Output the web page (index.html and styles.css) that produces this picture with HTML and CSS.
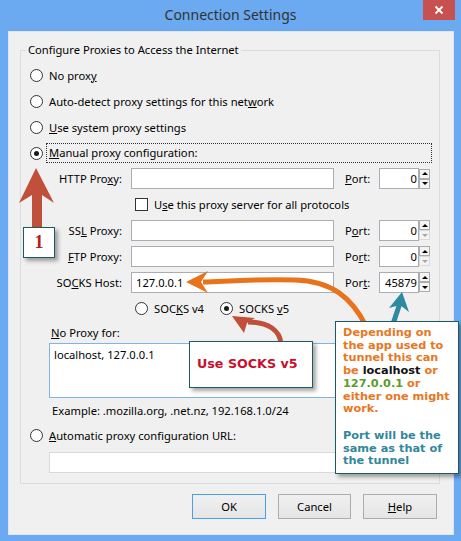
FILE: index.html
```html
<!DOCTYPE html>
<html lang="en">
<head>
<meta charset="utf-8">
<title>Connection Settings</title>
<link rel="stylesheet" href="styles.css">
</head>
<body>
<div class="window">
  <div class="titlebar">
    <div></div>
    <div class="title">Connection Settings</div>
    <div class="close"><svg width="10" height="10" viewBox="0 0 10 10"><path d="M1.5 1.5 L8.5 8.5 M8.5 1.5 L1.5 8.5" stroke="#fff" stroke-width="1.8"/></svg></div>
  </div>
  <div class="client">
    <fieldset class="group">
      <legend>Configure Proxies to Access the Internet</legend>
      <div class="rrow"><span class="radio"></span><span>No prox<u>y</u></span></div>
      <div class="rrow"><span class="radio"></span><span>Auto-detect proxy settings for this net<u>w</u>ork</span></div>
      <div class="rrow"><span class="radio"></span><span><u>U</u>se system proxy settings</span></div>
      <div class="rrow"><span class="radio on"></span><span class="focus"><u>M</u>anual proxy configuration:</span></div>
      <div class="prow first"><span class="plabel">HTTP Pro<u>x</u>y:</span><span class="tbox"></span><span class="portl"><u>P</u>ort:</span><span class="portin">0</span><span class="spin"><span class="up"></span><span class="dn"></span></span></div>
      <div class="crow"><span class="check"></span><span>U<u>s</u>e this proxy server for all protocols</span></div>
      <div class="prow"><span class="plabel">SS<u>L</u> Proxy:</span><span class="tbox"></span><span class="portl">P<u>o</u>rt:</span><span class="portin">0</span><span class="spin"><span class="up"></span><span class="dn off"></span></span></div>
      <div class="prow"><span class="plabel"><u>F</u>TP Proxy:</span><span class="tbox"></span><span class="portl">Po<u>r</u>t:</span><span class="portin">0</span><span class="spin"><span class="up"></span><span class="dn off"></span></span></div>
      <div class="prow"><span class="plabel">SO<u>C</u>KS Host:</span><span class="tbox">127.0.0.1</span><span class="portl">Por<u>t</u>:</span><span class="portin">45879</span><span class="spin"><span class="up"></span><span class="dn"></span></span></div>
      <div class="vrow"><span class="radio"></span><span class="v4">SOC<u>K</u>S v4</span><span class="radio on"></span><span>SOCKS <u>v</u>5</span></div>
      <div class="nlabel"><u>N</u>o Proxy for:</div>
      <div class="tarea">localhost, 127.0.0.1</div>
      <div class="example">Example: .mozilla.org, .net.nz, 192.168.1.0/24</div>
      <div class="rrow"><span class="radio"></span><span><u>A</u>utomatic proxy configuration URL:</span></div>
      <div class="urlbox"></div>
    </fieldset>
    <div class="buttons">
      <div class="btn default">OK</div>
      <div class="btn cancel">Cancel</div>
      <div class="btn"><u>H</u>elp</div>
    </div>
  </div>

  <svg class="annot" width="461" height="541" viewBox="0 0 461 541">
    <polygon points="36,168 54,203 42,195 42,230 32,230 32,195 19,203" fill="#c0503a"/>
    <path d="M366 326 C352 298 332 281 295 280 C260 279 232 281 203 282" fill="none" stroke="#e8731b" stroke-width="5"/>
    <polygon points="186,282 208,271 201,282 208,293" fill="#e8731b"/>
    <path d="M393 324 L400 303" fill="none" stroke="#2e8b9f" stroke-width="5"/>
    <polygon points="402,292 409,312 400,305 389,308" fill="#2e8b9f"/>
    <path d="M281 344 C280 330 268 322 248 322" fill="none" stroke="#c0503a" stroke-width="5"/>
    <polygon points="232,316 255,318 247,323 244,333" fill="#c0503a"/>
  </svg>

  <div class="tag1">1</div>
  <div class="tag2">Use SOCKS v5</div>
  <div class="callout">
    <div class="c1">Depending on<br>the app used to<br>tunnel this can<br>be <span class="k">localhost</span> or<br><span class="g">127.0.0.1</span> or<br>either one might<br>work.</div>
    <div class="c2">Port will be the<br>same as that of<br>the tunnel</div>
  </div>
</div>
</body>
</html>
```

FILE: styles.css
```css
* { box-sizing: border-box; }
html, body { margin: 0; padding: 0; }
body {
  width: 461px;
  height: 541px;
  overflow: hidden;
  background: #6ba9f0;
  font-family: "Noto Sans", "Open Sans", sans-serif;
  font-size: 11.2px;
  color: #000;
}
u { text-decoration: underline; text-underline-offset: 1px; }

.window { position: relative; width: 461px; height: 541px; background: #6ba9f0; }

.titlebar { height: 31px; display: grid; grid-template-columns: 1fr auto 1fr; }
.title { font-size: 14px; line-height: 30px; color: #333; }
.close {
  justify-self: end; margin-right: 6px; width: 32px; height: 20px;
  background: #c75050; display: flex; align-items: center; justify-content: center;
}

.client {
  margin-left: 8px; width: 446px; height: 504px;
  background: #f0f0f0; border: 1px solid #dde7f3;
  padding: 10px 13px 0 11px;
}

.group { margin: 0; padding: 4px 0 10px 0; border: 1px solid #dcdcdc; min-width: 0; }
.group legend { margin-left: 5px; padding: 0 2px; line-height: 16px; }

.rrow { height: 26px; display: flex; align-items: center; padding-left: 9px; white-space: nowrap; }
.radio {
  width: 13px; height: 13px; border: 1px solid #333; border-radius: 50%;
  background: #fff; margin-right: 6px; flex: none;
  display: flex; align-items: center; justify-content: center;
}
.radio.on::after { content: ""; width: 5px; height: 5px; border-radius: 50%; background: #1a1a1a; }
.focus {
  margin-left: -3px; width: 386px; height: 20px;
  border: 1px dotted #333; padding-left: 2px; line-height: 17px;
}

.prow { height: 26px; display: flex; align-items: center; white-space: nowrap; }
.prow.first { height: 25px; }
.plabel { width: 101px; text-align: right; margin-right: 9px; flex: none; }
.tbox {
  width: 203px; height: 21px; border: 1px solid #abadb3; background: #fff;
  padding: 0 4px; line-height: 19px; flex: none;
}
.portl { margin-left: 11px; width: 34px; flex: none; }
.portin {
  width: 40px; height: 21px; border: 1px solid #abadb3; background: #fff;
  text-align: right; padding-right: 1px; line-height: 19px; flex: none;
}
.spin { width: 11px; height: 20px; display: flex; flex-direction: column; flex: none; }
.spin span {
  height: 10px; border: 1px solid #acacac; background: #f4f4f4;
  display: flex; align-items: center; justify-content: center;
}
.spin .up::after {
  content: ""; border-left: 3px solid transparent; border-right: 3px solid transparent;
  border-bottom: 3px solid #000;
}
.spin .dn::after {
  content: ""; border-left: 3px solid transparent; border-right: 3px solid transparent;
  border-top: 3px solid #000;
}
.spin .dn.off { border-color: #dadada; }
.spin .dn.off::after { border-top-color: #a8a8a8; }

.crow { height: 26px; display: flex; align-items: center; padding-left: 114px; white-space: nowrap; }
.check { width: 13px; height: 13px; border: 1px solid #333; background: #fff; margin-right: 6px; flex: none; }

.vrow { height: 26px; display: flex; align-items: center; padding-left: 114px; white-space: nowrap; }
.v4 { width: 66px; }

.nlabel { height: 22px; display: flex; align-items: center; padding-left: 30px; }
.tarea {
  margin-left: 28px; width: 381px; height: 55px;
  border: 1px solid #7eb4ea; background: #fff; padding: 3px 4px; line-height: 16px;
}
.example { height: 24px; display: flex; align-items: center; padding-left: 31px; }
.urlbox { margin: 4px 0 0 28px; width: 381px; height: 21px; border: 1px solid #d9d9d9; background: #fff; }

.buttons { margin-top: 10px; display: flex; justify-content: flex-end; gap: 12px; padding-right: 3px; }
.btn {
  width: 74px; height: 25px; border: 1px solid #acacac;
  background: linear-gradient(#f0f0f0, #e5e5e5);
  display: flex; align-items: center; justify-content: center;
}
.btn.cancel { width: 73px; }
.btn.default { border-color: #4aa0e8; }

.annot { position: absolute; left: 0; top: 0; pointer-events: none; }

.tag1 {
  position: absolute; left: 23px; top: 227px; width: 32px; height: 31px;
  background: #fff; border: 1px solid #1e5a5f; box-shadow: 3px 3px 4px rgba(0,0,0,0.35);
  display: flex; align-items: center; justify-content: center;
  font-family: "Liberation Serif", serif; font-weight: bold; font-size: 18px; color: #b51c1c;
}
.tag2 {
  position: absolute; left: 189px; top: 341px; width: 124px; height: 47px;
  background: #fff; border: 1px solid #1e5a5f; box-shadow: 3px 3px 4px rgba(0,0,0,0.35);
  display: flex; align-items: center; padding-left: 7px; padding-bottom: 2px;
  font-family: "DejaVu Sans", sans-serif; font-weight: bold; font-size: 12.7px; color: #c8102e;
  white-space: nowrap;
}
.callout {
  position: absolute; left: 335px; top: 321px; width: 124px; height: 153px;
  background: #fff; border: 1px solid #1e5a5f; box-shadow: 3px 3px 4px rgba(0,0,0,0.35);
  padding: 5px 0 0 7px;
  font-family: "DejaVu Sans", sans-serif; font-weight: bold; font-size: 11.3px; line-height: 12.7px;
  white-space: nowrap;
}
.c1 { color: #e8771f; }
.c1 .k { color: #111; }
.c1 .g { color: #5c9c2c; }
.c2 { margin-top: 14px; color: #31879b; }
```
